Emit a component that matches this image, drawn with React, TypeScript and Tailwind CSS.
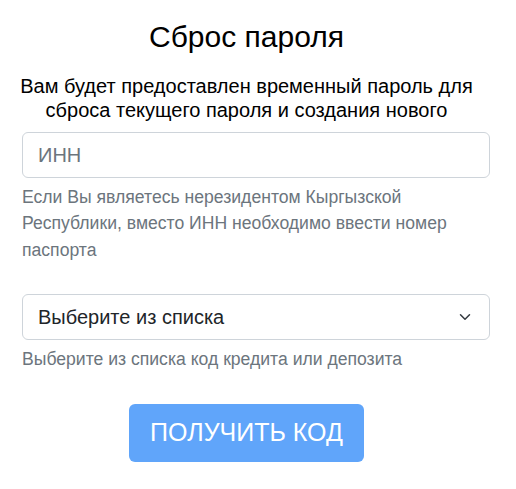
import React from "react";

export default function App() {
  return (
    <div
      className="w-[516px] h-[489px] bg-white"
      style={{ fontFamily: '"Liberation Sans", Arial, sans-serif' }}
    >
      <div className="pl-[22px] pr-[26px] pt-[19px]">
        <div className="w-[449px] flex flex-col items-center text-center">
          <h1 className="text-[30px] leading-[36px] text-black">Сброс пароля</h1>
          <p className="mt-[20px] flex flex-col items-center text-[20px] leading-[23.5px] text-black">
            <span className="whitespace-nowrap">Вам будет предоставлен временный пароль для</span>
            <span className="whitespace-nowrap">сброса текущего пароля и создания нового</span>
          </p>
        </div>
        <div className="mt-[10px] h-[46px] w-[468px] rounded-[6px] border border-[#ced4da] flex items-center px-[15px]">
          <span className="text-[20px] text-[#6c757d]">ИНН</span>
        </div>
        <p className="mt-[6px] text-[17.6px] leading-[26.4px] text-[#6c757d] w-[468px]">
          Если Вы являетесь нерезидентом Кыргызской Республики, вместо ИНН необходимо ввести номер паспорта
        </p>
        <div className="mt-[31px] h-[46px] w-[468px] rounded-[6px] border border-[#ced4da] flex items-center justify-between pl-[15px] pr-[16px]">
          <span className="text-[20px] text-[#212529]">Выберите из списка</span>
          <svg width="16" height="12" viewBox="0 0 16 16" fill="none">
            <path d="m2 5 6 6 6-6" stroke="#343a40" strokeWidth="2" strokeLinecap="round" strokeLinejoin="round" />
          </svg>
        </div>
        <p className="mt-[6px] text-[17.6px] leading-[26.4px] text-[#6c757d]">
          Выберите из списка код кредита или депозита
        </p>
        <div className="w-[449px] flex justify-center mt-[31px]">
          <button className="h-[58px] px-[21px] rounded-[6px] bg-[#60a5fa] text-white text-[25px]">
            ПОЛУЧИТЬ КОД
          </button>
        </div>
      </div>
    </div>
  );
}
